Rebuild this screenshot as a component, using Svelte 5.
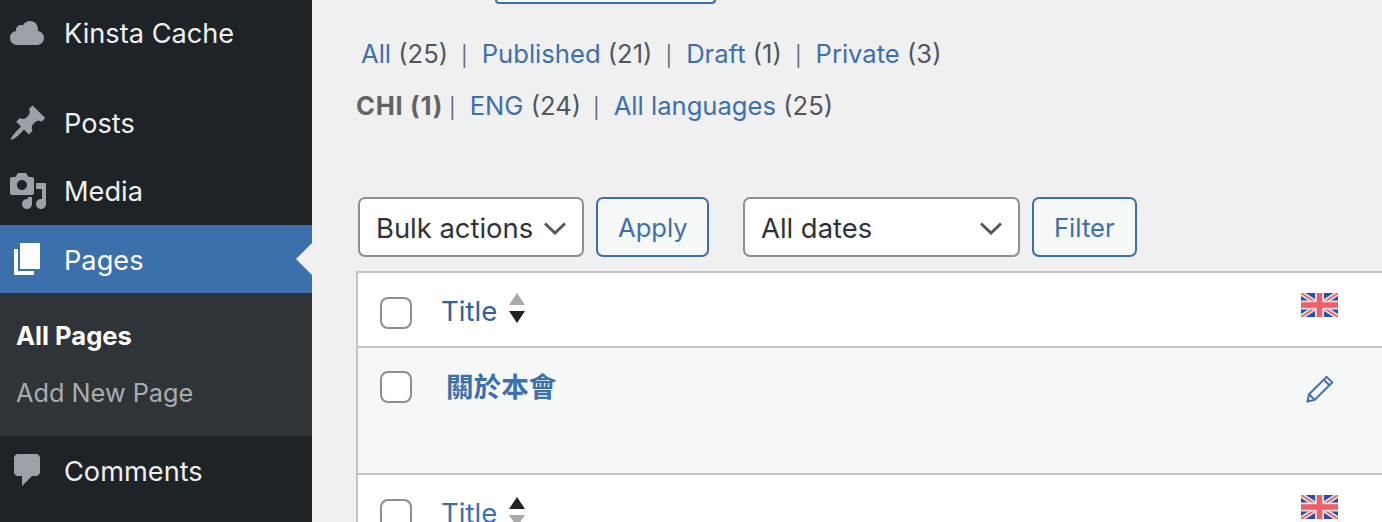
<script>
	const menuTop = [
		{ label: 'Posts', d: 'M10.44 3.02l1.82-1.82 6.36 6.35-1.83 1.82c-1.05-.68-2.48-.57-3.41.36l-.75.75c-.92.93-1.04 2.35-.35 3.41l-1.83 1.82-2.41-2.41-2.8 2.79c-.42.42-3.38 2.71-3.8 2.29s1.86-3.39 2.28-3.81l2.79-2.79L4.1 9.36l1.83-1.82c1.05.69 2.48.57 3.4-.36l.75-.75c.93-.92 1.05-2.35.36-3.41z' },
		{ label: 'Media', d: 'M13 11V4c0-.55-.45-1-1-1h-1.67L9 1H5L3.67 3H2c-.55 0-1 .45-1 1v7c0 .55.45 1 1 1h10c.55 0 1-.45 1-1zM7 4.5c1.38 0 2.5 1.12 2.5 2.5S8.38 9.5 7 9.5 4.5 8.38 4.5 7 5.62 4.5 7 4.5zM14 6h5v10.5c0 1.38-1.12 2.5-2.5 2.5S14 17.88 14 16.5s1.12-2.5 2.5-2.5c.17 0 .34.02.5.05V9h-3V6zm-4 8.05V13h2v3.5c0 1.38-1.12 2.5-2.5 2.5S7 17.88 7 16.5 8.12 14 9.5 14c.17 0 .34.02.5.05z' }
	];
	const cloud = 'M14.9 9c1.8.2 3.1 1.7 3.1 3.5 0 1.9-1.6 3.5-3.5 3.5h-10C2.6 16 1 14.4 1 12.5 1 10.7 2.3 9.3 4.1 9 4 8.9 4 8.7 4 8.5 4 7.1 5.1 6 6.5 6c.3 0 .7.1.9.2C8.1 4.9 9.4 4 11 4c2.2 0 4 1.8 4 4 0 .4-.1.7-.1 1z';
	const pageIcon = 'M6 15V2h10v13H6zm-1 1h8v2H3V5h2v11z';
	const commentIcon = 'M5 2h9c1.1 0 2 .9 2 2v7c0 1.1-.9 2-2 2h-2l-5 5v-5H5c-1.1 0-2-.9-2-2V4c0-1.1.9-2 2-2z';

	const statuses = [
		{ label: 'All', count: 25 },
		{ label: 'Published', count: 21 },
		{ label: 'Draft', count: 1 },
		{ label: 'Private', count: 3 }
	];
</script>

{#snippet flag()}
	<svg class="flag" viewBox="0 0 37 24" aria-hidden="true">
		<rect width="37" height="24" fill="#2451a8" />
		<path d="M0 0L37 24M37 0L0 24" stroke="#e8dfe2" stroke-width="5" />
		<path d="M0 0L37 24M37 0L0 24" stroke="#ee5f68" stroke-width="1.8" />
		<path d="M18.5 0V24M0 12H37" stroke="#e8dfe2" stroke-width="9" />
		<path d="M18.5 0V24M0 12H37" stroke="#ee5f68" stroke-width="5.5" />
	</svg>
{/snippet}

{#snippet chevron()}
	<svg class="chevron" viewBox="0 0 22 14" aria-hidden="true">
		<path d="M1 2.5l10 9.5L21 2.5" fill="none" stroke="#50575e" stroke-width="3" />
	</svg>
{/snippet}

<div class="page">
	<aside class="sidebar">
		<div class="item cache">
			<svg viewBox="0 0 20 20"><path d={cloud} /></svg>
			<span>Kinsta Cache</span>
		</div>
		<div class="spacer"></div>
		{#each menuTop as m}
			<div class="item">
				<svg viewBox="0 0 20 20"><path d={m.d} /></svg>
				<span>{m.label}</span>
			</div>
		{/each}
		<div class="item current">
			<svg viewBox="0 0 20 20"><path d={pageIcon} /></svg>
			<span class="nudge">Pages</span>
			<i class="notch"></i>
		</div>
		<div class="submenu">
			<div class="sub active">All Pages</div>
			<div class="sub">Add New Page</div>
		</div>
		<div class="item">
			<svg viewBox="0 0 20 20"><path d={commentIcon} /></svg>
			<span class="nudge">Comments</span>
		</div>
	</aside>

	<main>
		<div class="top-button"></div>

		<ul class="filters status">
			{#each statuses as s, i}
				<li>{#if i > 0}<span class="sep">|</span>{/if}<a href="#top">{s.label}</a> <span class="count">({s.count})</span></li>
			{/each}
		</ul>

		<ul class="filters langs">
			<li class="strong">CHI (1)</li>
			<li class="tight"><span class="sep">|</span><a href="#top">ENG</a> <span class="count">(24)</span></li>
			<li><span class="sep">|</span><a href="#top">All languages</a> <span class="count">(25)</span></li>
		</ul>

		<div class="toolbar">
			<div class="select bulk">Bulk actions {@render chevron()}</div>
			<div class="btn apply">Apply</div>
			<div class="select dates">All dates {@render chevron()}</div>
			<div class="btn filter">Filter</div>
		</div>

		<div class="table">
			<div class="row head">
				<span class="check"></span>
				<a class="title dark" href="#top">Title</a>
				<span class="sort">
					<i class="up off"></i>
					<i class="down"></i>
				</span>
				<span class="lang">{@render flag()}</span>
			</div>
			<div class="row body">
				<span class="check"></span>
				<a class="page-name" href="#top">關於本會</a>
				<span class="lang">
					<svg class="pencil" viewBox="0 0 28 28" aria-hidden="true">
						<path d="M1.5 26.5l1.6-7.2L20.6 1.8l5.6 5.6L8.7 24.9zM3.1 19.3l5.6 5.6M17.8 4.6l5.6 5.6" fill="none" stroke="#3c70ad" stroke-width="2" />
					</svg>
				</span>
			</div>
			<div class="row foot">
				<span class="check"></span>
				<a class="title" href="#top">Title</a>
				<span class="sort">
					<i class="up"></i>
					<i class="down off"></i>
				</span>
				<span class="lang">{@render flag()}</span>
			</div>
		</div>
	</main>
</div>

<style>
	:global(body) {
		margin: 0;
		background: #f0f0f1;
	}

	.page {
		display: flex;
		height: 522px;
		overflow: hidden;
		background: #f0f0f1;
		font-family: Inter, "Noto Sans CJK TC", sans-serif;
		font-size: 26px;
		color: #50575e;
	}

	a {
		color: #3c70ad;
		text-decoration: none;
	}

	/* sidebar */
	.sidebar {
		flex: 0 0 312px;
		background: #1d2327;
	}

	.item {
		position: relative;
		display: flex;
		align-items: center;
		height: 68px;
		padding-left: 8px;
		font-size: 27.2px;
		color: #f0f0f1;
	}

	.item svg {
		width: 40px;
		height: 40px;
		margin-right: 16px;
		fill: #9ca1a7;
	}

	.nudge {
		padding-top: 2px;
	}

	.cache {
		height: 66px;
	}

	.spacer {
		height: 23px;
	}

	.current {
		background: #3c70ad;
		color: #fff;
	}

	.current svg {
		fill: #fff;
	}

	.notch {
		position: absolute;
		right: 0;
		top: 18px;
		border: 16px solid transparent;
		border-left: 0;
		border-right-color: #f0f0f1;
	}

	.submenu {
		height: 143px;
		padding-top: 14px;
		box-sizing: border-box;
		background: #2f3438;
	}

	.sub {
		height: 57px;
		line-height: 57px;
		padding-left: 16px;
		font-size: 25.3px;
		color: #a9adb2;
	}

	.active {
		font-size: 25.6px;
		font-weight: 700;
		color: #fff;
	}

	/* main column */
	main {
		flex: 1;
		min-width: 0;
		padding-left: 44px;
	}

	.top-button {
		width: 217px;
		height: 2px;
		margin-left: 139px;
		border: 2px solid #3c70ad;
		border-top: 0;
		border-radius: 0 0 6px 6px;
		background: #f6f7f7;
	}

	.filters {
		display: flex;
		margin: 0;
		padding: 0;
		list-style: none;
		white-space: nowrap;
		line-height: 52px;
		font-size: 25.6px;
	}

	.status {
		margin-top: 24px;
		padding-left: 5px;
	}

	.langs {
		margin-top: -2px;
	}

	.sep {
		margin: 0 14px 0 13px;
		font-size: 20px;
		color: #646970;
	}

	.langs .sep {
		margin: 0 14px 0 12px;
	}

	.langs .tight .sep {
		margin-left: 6px;
	}

	.count {
		color: #50575e;
	}

	.strong {
		font-weight: 700;
		letter-spacing: 0.7px;
		color: #646464;
	}

	.toolbar {
		display: flex;
		align-items: stretch;
		height: 60px;
		margin-top: 63px;
		margin-left: 2px;
		margin-bottom: 14px;
		font-size: 27.4px;
	}

	.select {
		display: flex;
		align-items: center;
		justify-content: space-between;
		box-sizing: border-box;
		padding: 1px 16px 0 16px;
		background: #fff;
		border: 2px solid #8c8f94;
		border-radius: 7px;
		color: #2c3338;
	}

	.bulk {
		width: 226px;
		margin-right: 12px;
	}

	.dates {
		width: 277px;
		margin-right: 12px;
	}

	.chevron {
		width: 22px;
		height: 14px;
	}

	.btn {
		display: flex;
		align-items: center;
		box-sizing: border-box;
		padding: 0 20px;
		background: #f6f7f7;
		border: 2px solid #3c70ad;
		border-radius: 7px;
		font-size: 25.6px;
		color: #3c70ad;
	}

	.apply {
		width: 113px;
		margin-right: 34px;
	}

	.filter {
		width: 105px;
	}

	/* table */
	.table {
		border: 2px solid #c3c4c7;
		border-right: 0;
		background: #fff;
	}

	.row {
		position: relative;
		display: flex;
		box-sizing: border-box;
		padding-left: 22px;
	}

	.head {
		height: 75px;
		border-bottom: 2px solid #c3c4c7;
		align-items: center;
	}

	.body {
		height: 127px;
		padding-top: 23px;
		background: #f6f7f7;
		border-bottom: 2px solid #c3c4c7;
	}

	.foot {
		height: 80px;
		padding-top: 24px;
	}

	.check {
		flex: none;
		width: 32px;
		height: 32px;
		box-sizing: border-box;
		background: #fff;
		border: 2px solid #8c8f94;
		border-radius: 8px;
	}

	.head .check {
		margin-top: 6px;
	}

	.title {
		margin-left: 29px;
		font-size: 27.6px;
	}

	.head .title {
		margin-top: 2px;
	}

	.dark {
		color: #2f6299;
	}

	.foot .title {
		margin-top: -2px;
		line-height: 32px;
	}

	.sort {
		display: flex;
		flex-direction: column;
		gap: 6px;
		margin-left: 12px;
	}

	.head .sort {
		margin-top: -3px;
	}

	.foot .sort {
		margin-top: -2px;
	}

	.up,
	.down {
		width: 0;
		height: 0;
		border-left: 8px solid transparent;
		border-right: 8px solid transparent;
	}

	.up {
		border-bottom: 12px solid #1d2327;
	}

	.down {
		border-top: 12px solid #1d2327;
	}

	.up.off {
		border-bottom-color: #a7aaad;
	}

	.down.off {
		border-top-color: #a7aaad;
	}

	.page-name {
		margin-left: 34px;
		margin-top: -4px;
		font-size: 27.6px;
		font-weight: 700;
		line-height: 40px;
		height: 40px;
	}

	.lang {
		position: absolute;
		left: 943px;
	}

	.head .lang {
		top: 20px;
	}

	.body .lang {
		top: 27px;
		left: 948px;
	}

	.foot .lang {
		top: 20px;
	}

	.flag {
		display: block;
		width: 37px;
		height: 24px;
	}

	.pencil {
		display: block;
		width: 28px;
		height: 28px;
	}
</style>
